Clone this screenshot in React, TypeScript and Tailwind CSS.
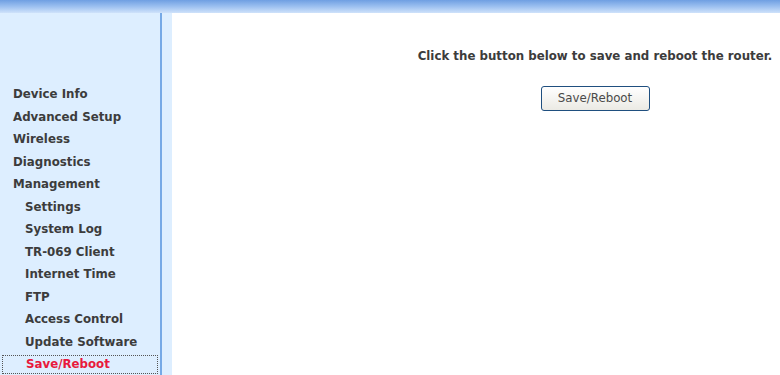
const menu = [
  { label: "Device Info", sub: false },
  { label: "Advanced Setup", sub: false },
  { label: "Wireless", sub: false },
  { label: "Diagnostics", sub: false },
  { label: "Management", sub: false },
  { label: "Settings", sub: true },
  { label: "System Log", sub: true },
  { label: "TR-069 Client", sub: true },
  { label: "Internet Time", sub: true },
  { label: "FTP", sub: true },
  { label: "Access Control", sub: true },
  { label: "Update Software", sub: true },
  { label: "Save/Reboot", sub: true, active: true },
];

export default function App() {
  return (
    <div className="flex h-[375px] w-[780px] flex-col overflow-hidden bg-white font-['DejaVu_Sans',sans-serif] text-[11.8px]">
      {/* Top bar */}
      <div className="h-[13px] shrink-0 bg-gradient-to-b from-[#6f9fe2] via-[#9cc0f0] to-[#cfe2fa]" />

      <div className="flex flex-1">
        {/* Sidebar */}
        <nav className="w-[160px] shrink-0 bg-[#ddeeff] pt-[70px]">
          {menu.map((item) => (
            <div
              key={item.label}
              className={
                "mx-[2px] whitespace-nowrap font-bold " +
                (item.sub ? "pl-[23px] " : "pl-[11px] ") +
                (item.active
                  ? "mt-[2px] h-[19px] border border-dotted border-[#555] leading-[17px] text-[#e8193c]"
                  : "h-[22.5px] leading-[22px] text-[#3c3c3c]")
              }
            >
              {item.label}
            </div>
          ))}
        </nav>
        <div className="w-[2px] shrink-0 bg-[#76a9e6]" />
        <div className="w-[10px] shrink-0 bg-[#ddeeff]" />

        {/* Content */}
        <main className="flex-1">
          <div className="ml-[223px] mt-[36px] flex w-[400px] flex-col items-center">
            <p className="whitespace-nowrap font-bold leading-[14px] text-[#3c3c3c]">
              Click the button below to save and reboot the router.
            </p>
            <button className="mt-[23px] h-[25px] w-[109px] rounded-[3px] border border-[#1f4f7f] bg-gradient-to-b from-white to-[#ebeae4] text-[11.8px] text-[#4a4a4a]">
              Save/Reboot
            </button>
          </div>
        </main>
      </div>
    </div>
  );
}
